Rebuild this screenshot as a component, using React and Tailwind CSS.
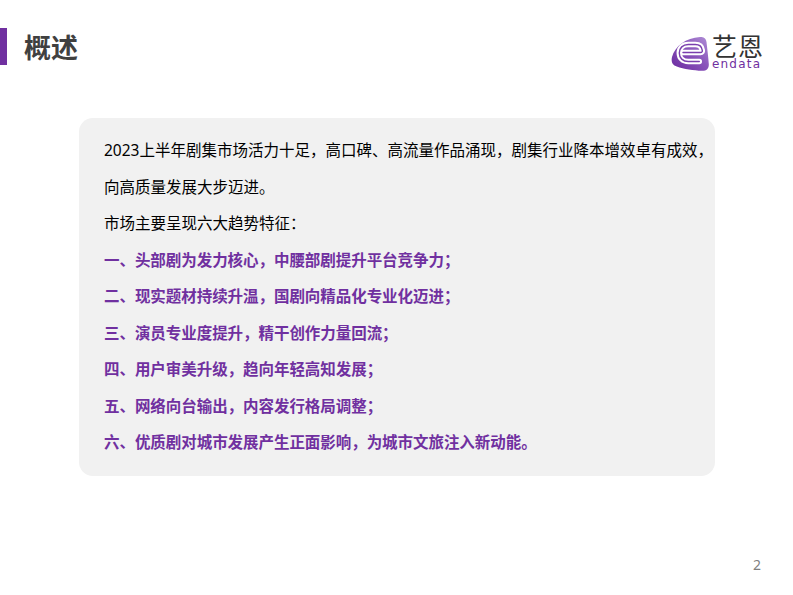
import React from "react";

const cjk = "font-['Noto_Sans','Noto_Sans_CJK_SC',sans-serif]";

const intro = [
  "2023上半年剧集市场活力十足，高口碑、高流量作品涌现，剧集行业降本增效卓有成效，",
  "向高质量发展大步迈进。",
  "市场主要呈现六大趋势特征：",
];

const trends = [
  "一、头部剧为发力核心，中腰部剧提升平台竞争力；",
  "二、现实题材持续升温，国剧向精品化专业化迈进；",
  "三、演员专业度提升，精干创作力量回流；",
  "四、用户审美升级，趋向年轻高知发展；",
  "五、网络向台输出，内容发行格局调整；",
  "六、优质剧对城市发展产生正面影响，为城市文旅注入新动能。",
];

function Logo() {
  return (
    <div className="flex items-start gap-[3px]">
      <svg width="38" height="34" viewBox="0 0 38 34" className="shrink-0 mt-[2px]">
        <defs>
          <linearGradient id="mark" x1="0" y1="1" x2="1" y2="0">
            <stop offset="0" stopColor="#6a2a9f" />
            <stop offset="0.55" stopColor="#8a55bb" />
            <stop offset="1" stopColor="#b08fd6" />
          </linearGradient>
        </defs>
        <path
          d="M1 20C4 9 15 1 29 0c4-.3 6 1.500 6.500 5 .8 7 1.800 15 2.300 22 .3 4.500-2 7-7 6.800-8-.3-18-1.800-25-4.300C1 28 0 24.500 1 20z"
          fill="url(#mark)"
        />
        <path
          d="M12 15.500h17.500c1.500 0 2-.8 1.800-2.200-.5-3.800-3-5.800-7-5.800h-7c-5.500 0-9 3.500-9 8.500s3.500 8.500 9 8.500h11"
          fill="none"
          stroke="#fff"
          strokeWidth="5.500"
          strokeLinecap="round"
          strokeLinejoin="round"
        />
        <path
          d="M12 15.500h17.500c1.500 0 2-.8 1.800-2.200-.5-3.800-3-5.800-7-5.800h-7c-5.500 0-9 3.500-9 8.500s3.500 8.500 9 8.500h11"
          fill="none"
          stroke="#7a3fae"
          strokeWidth="1.400"
          strokeLinecap="round"
          strokeLinejoin="round"
        />
      </svg>
      <div className="flex flex-col items-start">
        <h2 className={`${cjk} text-[25px] leading-[23px] font-normal text-[#333] tracking-[1px]`}>艺恩</h2>
        <p className="font-['DejaVu_Sans',sans-serif] text-[12px] leading-[12px] tracking-[1.2px] text-[#7030a0]">endata</p>
      </div>
    </div>
  );
}

export default function App() {
  return (
    <div className={`${cjk} w-[793px] h-[595px] bg-white flex flex-col overflow-hidden`}>
      <header className="h-[118px] shrink-0 flex items-start justify-between pr-[29px]">
        <div className="flex items-start gap-[17px] mt-[28px]">
          <div className="w-[7px] h-[37px] bg-[#7030a0]" />
          <h1 className="mt-[1px] text-[27px] leading-[37px] font-bold text-[#404040]">概述</h1>
        </div>
        <div className="mt-[35px]">
          <Logo />
        </div>
      </header>

      <main className="w-[636px] h-[358px] ml-[79px] shrink-0 rounded-[14px] bg-[#f1f1f1] pl-[25px] pt-[14px]">
        {intro.map((line) => (
          <p key={line} className="text-[15.5px] leading-[36.500px] text-black whitespace-nowrap">{line}</p>
        ))}
        {trends.map((line) => (
          <p key={line} className="text-[15.5px] tracking-[-0.05px] leading-[36.500px] font-bold text-[#7030a0] whitespace-nowrap">{line}</p>
        ))}
      </main>

      <footer className="flex-1 flex justify-end pr-[32px] pt-[81px]">
        <span className="text-[14px] leading-[16px] text-[#7f7f7f]">2</span>
      </footer>
    </div>
  );
}
